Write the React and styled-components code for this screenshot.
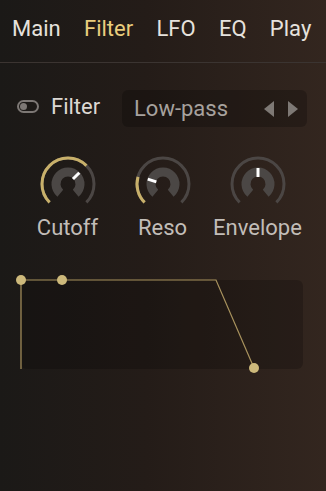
import React from 'react'
import styled, { createGlobalStyle } from 'styled-components'

const GlobalStyle = createGlobalStyle`
  html, body {
    margin: 0;
    padding: 0;
    background: #1c1a18;
  }
  body {
    font-family: Roboto, "Noto Sans", sans-serif;
  }
`;

const Page = styled.div`
  width: 326px;
  height: 491px;
  overflow: hidden;
  background: linear-gradient(90deg, #1b1917 0%, #241c18 45%, #33261f 100%);
  display: flex;
  flex-direction: column;
`;

const Tabs = styled.nav`
  display: flex;
  gap: 23.3px;
  height: 63px;
  padding: 18px 0 0 12px;
  align-items: flex-start;
  border-bottom: 1px solid #3b3431;
  box-sizing: border-box;
`;

const Tab = styled.div`
  font-size: 22px;
  line-height: 22px;
  color: ${p => (p.$active ? '#e9cd7d' : '#e6e2dd')};
`;

const FilterRow = styled.div`
  display: flex;
  align-items: center;
  padding: 27px 19px 0 17px;
`;

const ToggleLabel = styled.div`
  display: flex;
  align-items: center;
  gap: 12px;
  font-size: 22px;
  line-height: 22px;
  color: #dcd8d3;
  width: 105px;
  margin-top: -4px;
`;

const Select = styled.div`
  flex: 1;
  height: 37px;
  border-radius: 6px;
  background: rgba(0, 0, 0, 0.22);
  display: flex;
  align-items: center;
  padding: 0 9px 0 12px;
  box-sizing: border-box;
  font-size: 22px;
  line-height: 22px;
  color: #a7a29e;
`;

const SelectText = styled.span`
  flex: 1;
`;

const Arrows = styled.div`
  display: flex;
  gap: 14px;
  align-items: center;
`;

const Knobs = styled.div`
  display: grid;
  grid-template-columns: repeat(3, 95px);
  padding: 27px 0 0 20px;
`;

const KnobCell = styled.div`
  display: flex;
  flex-direction: column;
  align-items: center;
`;

const KnobLabel = styled.div`
  font-size: 22px;
  line-height: 22px;
  color: #c2bdb8;
  margin-top: 3px;
  white-space: nowrap;
`;

const GraphWrap = styled.div`
  position: relative;
  margin: 41px 23px 0 21px;
  height: 89px;
`;

const GraphPanel = styled.div`
  width: 100%;
  height: 100%;
  border-radius: 6px;
  background: rgba(0, 0, 0, 0.2);
`;

const GraphSvg = styled.svg`
  position: absolute;
  left: 0;
  top: 0;
  overflow: visible;
`;

const polar = (cx, cy, r, a) => {
  const rad = (a * Math.PI) / 180
  return [cx + r * Math.sin(rad), cy - r * Math.cos(rad)]
}

const arc = (cx, cy, r, a0, a1) => {
  const [x0, y0] = polar(cx, cy, r, a0)
  const [x1, y1] = polar(cx, cy, r, a1)
  const large = a1 - a0 > 180 ? 1 : 0
  return `M ${x0} ${y0} A ${r} ${r} 0 ${large} 1 ${x1} ${y1}`
}

const Knob = ({ gold, pointer }) => {
  const c = 30
  const [px0, py0] = polar(c, c, 7, pointer)
  const [px1, py1] = polar(c, c, 16, pointer)
  return (
    <svg width="60" height="60" viewBox="0 0 60 60">
      <path d={arc(c, c, 26, -135, 135)} fill="none" stroke="#4b4644" strokeWidth="3" />
      {gold && (
        <path d={arc(c, c, 26, gold[0], gold[1])} fill="none" stroke="#c8b06a" strokeWidth="3" />
      )}
      <path d={arc(c, c, 12, -140, 140)} fill="none" stroke="#4b4745" strokeWidth="9" />
      <line x1={px0} y1={py0} x2={px1} y2={py1} stroke="#ffffff" strokeWidth="3" />
    </svg>
  )
}

const knobs = [
  { label: 'Cutoff', gold: [-135, 45], pointer: 45 },
  { label: 'Reso', gold: [-135, -74], pointer: -72 },
  { label: 'Envelope', gold: null, pointer: 0 },
]

const tabs = ['Main', 'Filter', 'LFO', 'EQ', 'Play']

export default function App() {
  return (
    <Page>
      <GlobalStyle />
      <Tabs>
        {tabs.map(t => (
          <Tab key={t} $active={t === 'Filter'}>{t}</Tab>
        ))}
      </Tabs>
      <FilterRow>
        <ToggleLabel>
          <svg width="22" height="13" viewBox="0 0 22 13">
            <rect x="1" y="1" width="20" height="11" rx="5.5" fill="none" stroke="#7d7875" strokeWidth="2" />
            <circle cx="6.5" cy="6.5" r="3.5" fill="#7d7875" />
          </svg>
          Filter
        </ToggleLabel>
        <Select>
          <SelectText>Low-pass</SelectText>
          <Arrows>
            <svg width="10" height="16" viewBox="0 0 10 16">
              <path d="M10 0 L0 8 L10 16 Z" fill="#7e7975" />
            </svg>
            <svg width="10" height="16" viewBox="0 0 10 16">
              <path d="M0 0 L10 8 L0 16 Z" fill="#7e7975" />
            </svg>
          </Arrows>
        </Select>
      </FilterRow>
      <Knobs>
        {knobs.map(k => (
          <KnobCell key={k.label}>
            <Knob gold={k.gold} pointer={k.pointer} />
            <KnobLabel>{k.label}</KnobLabel>
          </KnobCell>
        ))}
      </Knobs>
      <GraphWrap>
        <GraphPanel />
        <GraphSvg width="282" height="89">
          <polyline points="0,89 0,0 195,0 233,88" fill="none" stroke="#a8925d" strokeWidth="1.2" />
          <circle cx="0" cy="0" r="5" fill="#cdb97b" />
          <circle cx="41" cy="0" r="5" fill="#cdb97b" />
          <circle cx="233" cy="88" r="5" fill="#cdb97b" />
        </GraphSvg>
      </GraphWrap>
    </Page>
  )
}
